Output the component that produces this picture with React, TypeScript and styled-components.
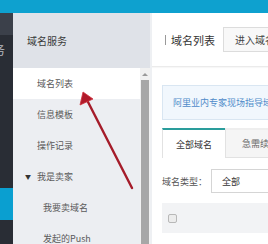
import React from "react";
import styled, { createGlobalStyle } from "styled-components";

const Global = createGlobalStyle`
  html, body { margin: 0; padding: 0; }
  body {
    width: 268px; height: 244px; overflow: hidden;
    font-family: "Noto Sans CJK SC", "Noto Sans", sans-serif;
    background: #fff;
  }
  #root { position: relative; width: 268px; height: 244px; overflow: hidden; }
`;

const Page = styled.div`
  display: flex; flex-direction: column; width: 268px; height: 244px;
`;
const TopBar = styled.div`
  height: 13px; flex: none; background: #0ea1cf;
`;
const Body = styled.div`
  display: flex; flex: 1; min-height: 0;
`;
const Rail = styled.div`
  width: 13px; flex: none; display: flex; flex-direction: column;
  background: #292d35; overflow: hidden;
`;
const RailBlock = styled.div<{ $h: number; $bg: string }>`
  height: ${(p) => p.$h}px; flex: none; background: ${(p) => p.$bg};
  display: flex; align-items: center; justify-content: flex-end; overflow: hidden;
`;
const RailLabel = styled.span`
  flex: none; margin-right: 8px; font-size: 12px; line-height: 12px;
  color: #b9bcc2; white-space: nowrap;
`;
const Sidebar = styled.div`
  width: 137px; flex: none; display: flex; flex-direction: column;
  background: #eceef2;
`;
const SideHeader = styled.div`
  height: 55px; flex: none; background: #dfe2e8;
  display: flex; align-items: center; padding-left: 14px;
  font-size: 10px; color: #3a3a3a;
`;
const SideBody = styled.div`
  display: flex; flex: 1; min-height: 0;
`;
const SideList = styled.div`
  flex: 1; display: flex; flex-direction: column;
`;
const SideItem = styled.div<{ $active?: boolean; $indent: number }>`
  height: 31px; flex: none; display: flex; align-items: center;
  padding-left: ${(p) => p.$indent}px;
  background: ${(p) => (p.$active ? "#ffffff" : "transparent")};
  font-size: 9px; color: #5a5a5a; white-space: nowrap;
`;
const Caret = styled.span`
  font-size: 6px; color: #333; width: 12px; display: inline-block;
`;
const ScrollCol = styled.div`
  width: 10px; flex: none; display: flex; flex-direction: column;
  background: #f1f1f1;
`;
const ScrollArrow = styled.div`
  height: 12px; flex: none; display: flex; justify-content: center; align-items: center;
  &::before {
    content: ""; border-left: 3px solid transparent; border-right: 3px solid transparent;
    border-bottom: 3px solid #9a9a9a;
  }
`;
const ScrollThumb = styled.div`
  flex: 1; background: #a7a7a7; margin: 0 1px;
`;
const Main = styled.div`
  flex: 1; min-width: 0; display: flex; flex-direction: column; background: #fff;
  border-left: 2px solid #eef0f3; overflow: hidden;
`;
const MainHeader = styled.div`
  height: 53px; flex: none; display: flex; align-items: center;
  padding-left: 13px; border-bottom: 1px solid #ebebeb;
  box-shadow: 0 1px 1px rgba(0,0,0,0.03);
`;
const TitleBar = styled.span`
  width: 1px; height: 10px; background: #999; margin-right: 5px; flex: none;
`;
const Title = styled.span`
  font-size: 11px; color: #333; white-space: nowrap; margin-right: 8px;
`;
const HeadButton = styled.div`
  height: 23px; flex: none; display: flex; align-items: center;
  padding: 0 10px 0 11px; border: 1px solid #dcdcdc; background: #f8f8f8;
  font-size: 10px; color: #444; white-space: nowrap;
`;
const Content = styled.div`
  display: flex; flex-direction: column; padding: 18px 0 0 10px;
`;
const Notice = styled.div`
  height: 33px; display: flex; align-items: center; padding-left: 10px;
  border: 1px solid #d9e6f2; border-right: none; background: #f1f7fd;
  font-size: 9px; color: #4f8bc9; white-space: nowrap;
`;
const Tabs = styled.div`
  display: flex; margin-top: 8px; border-bottom: 1px solid #e2e2e2; height: 29px;
`;
const Tab = styled.div<{ $active?: boolean }>`
  width: ${(p) => (p.$active ? 62 : 70)}px; flex: none; display: flex; align-items: center;
  justify-content: center; font-size: 9px; white-space: nowrap;
  padding-left: ${(p) => (p.$active ? "0" : "8px")};
  color: ${(p) => (p.$active ? "#333" : "#666")};
  background: ${(p) => (p.$active ? "#fff" : "#f5f5f5")};
  border-top: 2px solid ${(p) => (p.$active ? "#2a9d9c" : "#eee")};
  border-left: 1px solid #e2e2e2;
  margin-bottom: ${(p) => (p.$active ? "-1px" : "0")};
`;
const FilterRow = styled.div`
  display: flex; align-items: center; margin-top: 11px; height: 24px;
`;
const FilterLabel = styled.span`
  font-size: 9px; color: #555; width: 49px; white-space: nowrap;
`;
const Select = styled.div`
  flex: 1; height: 22px; display: flex; align-items: center; padding-left: 10px;
  border: 1px solid #d5d5d5; border-right: none; font-size: 9px; color: #333;
`;
const Table = styled.div`
  display: flex; flex-direction: column; margin-top: 10px;
`;
const Row = styled.div<{ $head?: boolean }>`
  height: 30px; display: flex; align-items: center; padding-left: 6px;
  background: ${(p) => (p.$head ? "#f2f3f5" : "#fff")};
`;
const Check = styled.span`
  width: 7px; height: 7px; border: 1px solid #b8b8b8; border-radius: 2px; background: #ececec;
`;
const Overlay = styled.svg`
  position: absolute; left: 0; top: 0; pointer-events: none;
`;

export default function App() {
  return (
    <>
      <Global />
      <Page>
        <TopBar />
        <Body>
          <Rail>
            <RailBlock $h={22} $bg="#3b404a" />
            <RailBlock $h={30} $bg="#292d35"><RailLabel>服务</RailLabel></RailBlock>
            <RailBlock $h={123} $bg="#292d35" />
            <RailBlock $h={32} $bg="#0a9fd0" />
          </Rail>
          <Sidebar>
            <SideHeader>域名服务</SideHeader>
            <SideBody>
              <SideList>
                <SideItem $active $indent={24}>域名列表</SideItem>
                <SideItem $indent={24}>信息模板</SideItem>
                <SideItem $indent={24}>操作记录</SideItem>
                <SideItem $indent={12}><Caret>▼</Caret>我是卖家</SideItem>
                <SideItem $indent={30}>我要卖域名</SideItem>
                <SideItem $indent={30}>发起的Push</SideItem>
              </SideList>
              <ScrollCol>
                <ScrollArrow />
                <ScrollThumb />
              </ScrollCol>
            </SideBody>
          </Sidebar>
          <Main>
            <MainHeader>
              <TitleBar />
              <Title>域名列表</Title>
              <HeadButton>进入域名交易</HeadButton>
            </MainHeader>
            <Content>
              <Notice>阿里业内专家现场指导域名投资</Notice>
              <Tabs>
                <Tab $active>全部域名</Tab>
                <Tab>急需续费域名</Tab>
              </Tabs>
              <FilterRow>
                <FilterLabel>域名类型：</FilterLabel>
                <Select>全部</Select>
              </FilterRow>
              <Table>
                <Row $head><Check /></Row>
                <Row><Check /></Row>
              </Table>
            </Content>
          </Main>
        </Body>
      </Page>
      <Overlay width="268" height="244" viewBox="0 0 268 244">
        <line x1="132" y1="188" x2="87" y2="100" stroke="#a51c2a" strokeWidth="2.4" strokeLinecap="round" />
        <polygon points="83,92 80,105 93,99" fill="#b01a2a" stroke="#d0303c" strokeWidth="0.8" strokeLinejoin="round" />
      </Overlay>
    </>
  );
}
